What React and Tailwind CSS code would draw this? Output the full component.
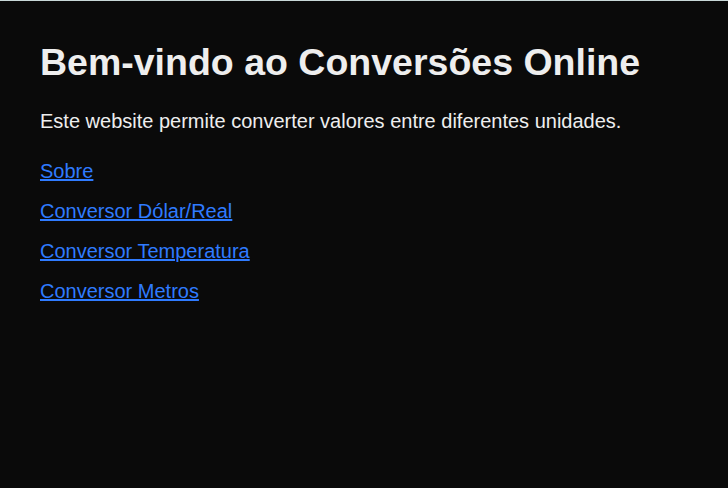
export default function App() {
  return (
    <div className="min-h-[488px] bg-[#0a0a0a] border-t border-[#c8d8d8] text-[#eeeeee] px-10 pt-[39px]" style={{ fontFamily: '"Liberation Sans", Arial, sans-serif' }}>
      <h1 className="text-[37.5px] font-bold leading-[45px]">Bem-vindo ao Conversões Online</h1>
      <p className="mt-[25px] text-[20px] leading-[23px]">Este website permite converter valores entre diferentes unidades.</p>
      <nav className="mt-[27px] flex flex-col items-start gap-[17px]">
        <a href="#" className="text-[20px] leading-[23px] text-[#2f7bff] underline">Sobre</a>
        <a href="#" className="text-[20px] leading-[23px] text-[#2f7bff] underline">Conversor Dólar/Real</a>
        <a href="#" className="text-[20px] leading-[23px] text-[#2f7bff] underline">Conversor Temperatura</a>
        <a href="#" className="text-[20px] leading-[23px] text-[#2f7bff] underline">Conversor Metros</a>
      </nav>
    </div>
  );
}
